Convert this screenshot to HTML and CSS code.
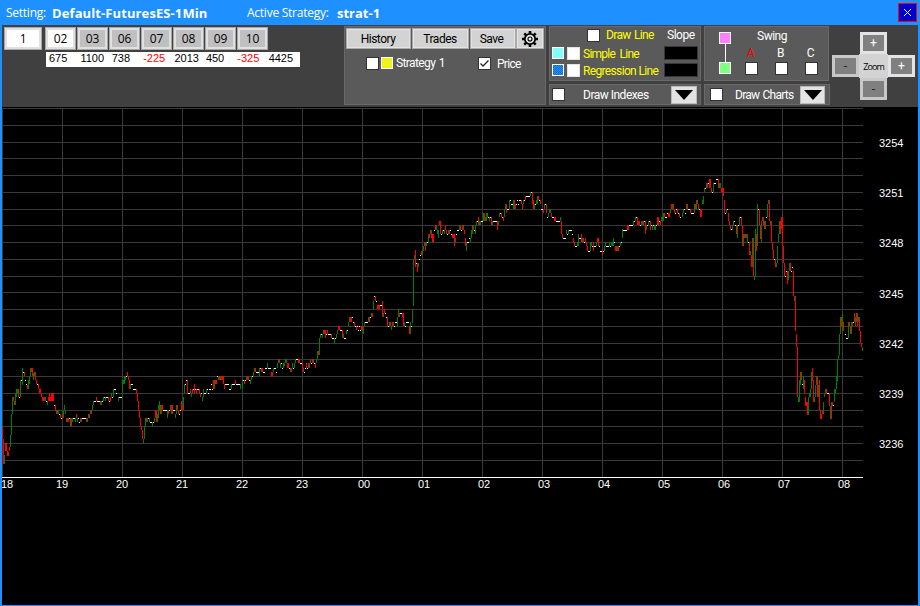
FILE: index.html
```html
<!DOCTYPE html>
<html lang="en">
<head>
<meta charset="utf-8">
<title>Default-FuturesES-1Min</title>
<link rel="stylesheet" href="styles.css">
</head>
<body>
<div class="window">
  <header class="titlebar">
    <span class="caption">Setting:</span><strong class="setting">Default-FuturesES-1Min</strong>
    <span class="caption active">Active Strategy:</span><strong class="strategy">strat-1</strong>
    <button class="close" aria-label="Close"><svg width="9" height="9" viewBox="0 0 9 9"><path d="M1 1L8 8M8 1L1 8" stroke="#fff" fill="none"/></svg></button>
  </header>
  <div class="toolbar">
    <section class="days">
      <div class="tabs"><button class="tab one">1</button><button class="tab on">02</button><button class="tab">03</button><button class="tab">06</button><button class="tab">07</button><button class="tab">08</button><button class="tab">09</button><button class="tab">10</button></div>
      <div class="totals"><span>675</span><span>1100</span><span>738</span><span class="neg">-225</span><span>2013</span><span>450</span><span class="neg">-325</span><span>4425</span></div>
    </section>
    <section class="panel main">
      <div class="actions"><button class="btn history">History</button><button class="btn trades">Trades</button><button class="btn save">Save</button><button class="btn gear" aria-label="Settings"><svg width="18" height="18" viewBox="0 0 18 18"><g stroke="#000" stroke-width="2.6"><path d="M9 1v16M1 9h16M3.3 3.3l11.4 11.4M14.7 3.3L3.3 14.7"/></g><circle cx="9" cy="9" r="5.2" fill="#e3e3e3" stroke="#000" stroke-width="1.8"/><circle cx="9" cy="9" r="2" fill="#eee" stroke="#000" stroke-width="1.1"/></svg></button></div>
      <div class="series"><i class="check"></i><i class="swatch yellow"></i><span class="name">Strategy 1</span><i class="check price"><svg width="11" height="11" viewBox="0 0 11 11"><path d="M1.5 5.5L4 8L9.5 2.5" stroke="#222" stroke-width="1.3" fill="none"/></svg></i><span>Price</span></div>
    </section>
    <div class="stack lines">
      <section class="panel tall">
        <div class="draw"><i class="check"></i><span class="hl">Draw Line</span><span class="slope">Slope</span></div>
        <div class="line"><i class="swatch cyan"></i><i class="check plain"></i><span class="hl simple">Simple&nbsp; Line</span><i class="value"></i></div>
        <div class="line"><i class="swatch blue"></i><i class="check plain"></i><span class="hl regression">Regression Line</span><i class="value"></i></div>
      </section>
      <section class="panel short"><i class="check"></i><span class="label">Draw Indexes</span><button class="drop" aria-label="Indexes"><svg width="18" height="10"><path d="M0 0H18L9 10Z"/></svg></button></section>
    </div>
    <div class="stack swings">
      <section class="panel tall swing">
        <div class="link"><i class="swatch pink"></i><i class="bar"></i><i class="swatch green"></i></div>
        <div class="options"><span class="title">Swing</span><div class="abc"><label class="red">A<i class="check"></i></label><label>B<i class="check"></i></label><label>C<i class="check"></i></label></div></div>
      </section>
      <section class="panel short"><i class="check"></i><span class="label">Draw Charts</span><button class="drop" aria-label="Charts"><svg width="18" height="10"><path d="M0 0H18L9 10Z"/></svg></button></section>
    </div>
    <section class="zoom"><button class="up">+</button><button class="left dim">-</button><span>Zoom</span><button class="right">+</button><button class="down dim">-</button></section>
  </div>
  <svg class="chart" width="916" height="498" viewBox="2 107 916 498" shape-rendering="crispEdges">
    <g id="grid" class="grid"></g>
    <path class="up-bars" transform="translate(.5 0)" d="M4 455V464M10 435V447M11 414V435M12 397V414M15 393V405M16 389V397M17 389V393M20 380V397M22 368V385M28 380V389M29 376V384M30 368V376M33 373V380M34 372V376M44 397V401M47 401V405M56 410V414M58 410V414M63 410V418M64 405V410M65 410V414M67 418V422M71 418V426M72 418V422M75 418V422M77 418V422M80 418V422M87 418V422M88 414V418M91 410V414M92 405V410M93 401V405M101 401V405M103 397V401M105 397V401M111 393V397M113 389V397M118 397V401M122 380V393M123 380V384M124 376V384M125 376V380M130 384V389M143 439V443M144 426V439M145 418V426M147 418V422M149 418V422M152 422V426M154 418V422M157 414V422M158 405V418M159 401V410M161 405V414M167 410V418M171 405V414M175 414V418M176 405V414M183 397V410M184 384V393M191 393V397M202 397V401M203 389V397M206 389V393M214 380V389M218 376V380M221 376V380M231 384V389M240 384V389M242 380V389M246 376V380M250 380V384M251 376V380M253 372V376M254 368V372M259 368V376M267 363V368M273 368V372M277 363V368M278 359V363M280 363V368M283 363V368M284 363V366M285 359V363M286 359V363M291 368V372M292 363V368M294 363V368M295 359V363M309 363V368M312 359V363M316 359V363M317 351V359M319 338V355M320 334V338M322 334V338M323 330V334M334 338V343M336 334V338M337 330V334M343 334V338M346 330V334M348 322V326M349 317V322M363 326V334M364 322V326M368 317V322M371 313V317M373 301V309M383 313V317M389 322V326M391 326V330M392 322V326M397 317V326M398 309V317M404 322V326M410 322V334M412 309V323M413 259V306M414 255V259M418 263V267M422 251V255M423 246V251M424 242V246M426 242V246M428 234V242M430 230V234M436 225V230M437 230V234M438 230V238M442 230V234M444 230V234M449 230V234M455 238V242M459 225V230M462 225V230M466 242V251M470 238V242M471 230V238M472 225V234M475 225V234M476 221V225M479 221V225M480 221V225M483 213V221M485 217V221M486 213V221M487 213V217M489 217V221M492 221V225M498 221V225M499 213V217M504 209V217M505 204V209M509 200V209M513 200V209M515 204V209M523 200V204M530 192V196M534 204V209M536 200V204M537 196V204M544 204V209M548 213V217M549 209V213M550 209V213M560 217V221M566 230V234M568 230V234M577 242V246M578 234V246M582 238V242M590 242V251M591 242V246M596 242V246M604 246V251M605 242V246M609 242V246M611 242V246M612 242V246M613 238V246M617 246V251M620 242V246M622 229V238M633 221V225M635 217V221M641 221V225M643 221V225M646 225V230M648 221V225M652 225V230M654 225V230M655 225V230M661 217V221M662 217V221M663 213V221M670 209V213M672 204V209M682 213V217M683 209V213M686 204V209M694 204V213M696 200V209M702 200V204M703 196V204M704 188V192M706 183V188M713 183V192M719 183V188M720 183V188M726 209V213M732 225V230M733 221V225M737 225V238M739 217V225M743 234V246M745 234V238M747 234V242M750 251V255M752 238V267M754 276V280M755 229V276M757 204V246M761 221V242M762 217V221M765 221V229M767 204V217M768 200V204M770 221V225M776 263V267M777 246V263M778 234V242M779 221V234M788 271V280M789 263V271M794 296V301M798 397V402M799 380V402M800 372V385M803 376V389M808 397V415M809 393V397M810 389V397M811 372V389M814 397V402M815 385V397M816 376V385M818 385V397M823 402V414M824 393V397M825 389V393M831 402V419M834 389V402M835 389V393M836 376V389M837 359V381M838 355V359M839 334V355M840 317V334M842 313V331M848 322V338M851 322V334M855 317V326M856 313V322M858 317V322M862 347V351"/>
    <path class="down-bars" transform="translate(.5 0)" d="M2 426V439M3 439V464M5 443V451M6 443V451M7 451V456M8 452V456M9 447V451M13 397V401M14 401V405M18 389V397M24 372V376M27 385V389M31 368V372M32 368V376M35 372V380M36 380V384M38 384V389M39 389V393M40 389V393M41 393V397M42 397V401M43 397V401M45 397V401M48 397V401M49 393V401M50 397V401M51 393V401M52 393V401M53 393V401M55 405V410M57 410V414M60 414V418M62 414V418M66 418V422M68 418V422M70 418V426M76 414V418M81 418V422M86 418V422M89 414V418M90 410V414M96 397V401M100 401V405M108 397V401M110 397V401M127 372V376M128 376V380M129 380V389M136 389V393M137 393V401M138 401V410M139 410V418M140 418V426M141 426V430M142 430V439M146 418V422M155 410V418M156 410V422M160 405V414M162 405V410M168 410V414M170 405V410M172 405V414M177 405V410M178 410V414M181 401V410M182 405V410M187 380V393M190 389V393M192 389V393M194 384V393M196 389V393M199 389V393M200 393V397M213 380V389M215 380V384M216 380V384M219 376V380M220 376V380M222 376V380M223 376V384M224 384V389M235 380V384M244 380V384M247 376V380M248 376V380M255 368V372M261 368V372M262 368V372M271 372V376M272 372V376M279 359V363M287 363V368M288 363V368M290 368V372M298 359V363M299 359V363M302 363V368M303 368V372M306 363V368M308 363V368M310 359V363M313 359V363M315 363V368M318 351V355M324 330V334M325 330V338M327 330V334M331 334V338M338 326V330M339 326V330M342 330V338M350 317V322M351 317V322M354 322V326M356 326V330M361 326V330M362 326V330M369 317V322M372 313V317M375 296V301M377 305V309M378 305V309M379 305V309M382 301V317M384 309V313M387 317V326M390 322V326M393 322V326M399 313V317M402 313V317M403 313V326M409 326V334M415 250V267M417 263V272M421 251V255M425 242V251M429 234V238M431 230V238M432 234V242M433 234V242M435 225V230M439 221V225M440 221V234M445 225V230M446 230V234M448 230V234M452 234V238M453 234V238M454 234V246M460 225V230M463 225V230M464 230V234M465 238V246M473 225V230M478 217V225M484 213V221M491 217V225M497 221V230M501 213V217M503 217V221M506 204V213M514 200V209M521 200V204M522 204V209M525 196V200M532 192V204M533 200V209M538 196V200M540 200V204M543 209V213M546 204V213M551 213V217M554 217V221M555 217V221M561 221V234M562 234V238M573 238V242M574 242V246M581 234V242M583 238V242M585 238V242M586 242V246M587 246V251M593 242V251M597 238V242M598 238V246M602 251V255M615 246V251M616 246V251M618 246V251M627 225V230M628 225V230M637 217V225M638 221V225M639 221V225M642 221V225M645 221V234M650 221V230M657 217V225M658 217V225M660 221V225M664 213V217M668 213V217M669 213V217M671 204V209M673 204V209M674 209V213M677 209V213M679 213V217M687 204V209M690 209V213M695 204V209M697 200V204M698 204V209M700 209V217M701 209V217M707 183V188M709 179V188M710 179V188M711 188V192M718 179V188M721 188V192M722 188V192M723 188V196M724 200V213M728 213V221M729 221V225M730 225V230M736 225V234M741 217V225M742 225V246M744 234V238M746 234V238M749 242V255M751 255V267M753 238V276M756 234V251M759 209V225M760 225V239M763 217V225M764 221V229M769 200V221M771 221V242M772 242V250M773 250V259M775 259V267M780 221V234M781 217V229M782 217V246M783 246V263M784 263V276M787 271V284M790 263V271M793 271V296M795 296V331M796 334V347M797 347V397M801 372V380M804 380V393M805 397V406M806 402V406M807 402V415M812 368V381M813 380V402M817 376V397M819 380V410M820 410V419M821 414V419M822 410V414M826 389V393M829 393V406M830 406V419M832 402V406M841 317V326M843 322V331M849 322V326M850 326V334M852 322V326M854 313V322M857 313V326M859 317V331M860 331V343M861 343V347"/>
    <path class="flat-bars" transform="translate(0 .5)" d="M19 397h1M21 380h1M23 372h1M25 380h1M26 384h1M37 384h1M46 401h1M54 405h1M59 414h1M61 418h1M69 418h1M73 418h2M78 418h1M79 422h1M82 418h4M94 401h2M97 401h3M102 401h1M104 397h1M106 397h2M109 401h1M112 397h1M114 389h2M116 393h1M119 397h3M126 376h1M131 384h2M133 389h3M148 418h1M150 422h2M153 422h1M163 410h4M169 410h1M173 410h2M179 414h1M180 410h1M185 384h1M186 380h1M188 393h2M193 389h1M195 389h1M197 389h2M201 393h1M204 393h2M207 389h1M208 393h1M209 389h2M211 384h1M212 389h1M217 376h1M225 384h4M229 389h2M232 384h3M236 384h4M243 380h1M245 380h1M249 380h1M252 376h1M256 372h3M260 368h1M263 372h2M265 368h2M268 368h3M274 368h2M276 372h1M281 363h1M282 368h1M289 368h1M293 368h1M296 359h2M300 363h2M304 372h1M305 368h1M307 368h1M311 363h1M314 363h1M321 334h1M326 334h1M328 334h3M332 338h2M335 338h1M340 330h2M344 338h2M347 330h1M352 317h1M353 322h1M355 326h1M357 326h1M358 330h1M359 326h1M360 330h1M365 322h3M370 317h1M374 296h1M376 301h1M380 305h2M385 313h1M386 317h1M388 326h1M394 326h1M395 322h2M400 313h2M405 326h1M406 322h3M411 326h1M416 263h1M419 259h1M420 255h1M427 242h1M434 230h1M441 234h1M443 230h1M447 234h1M450 230h1M451 234h1M456 234h1M457 230h2M461 230h1M467 242h2M469 238h1M474 230h1M477 221h1M481 221h2M488 217h1M490 217h1M493 221h4M500 213h1M502 217h1M507 209h2M510 200h1M511 204h2M516 204h1M517 200h1M518 204h1M519 200h2M524 200h1M526 196h4M531 192h1M535 204h1M539 200h1M541 209h2M545 204h1M547 217h1M552 217h2M556 221h4M563 238h3M567 234h1M569 230h3M572 234h1M575 246h2M579 238h2M584 242h1M588 251h2M592 246h1M594 246h2M599 246h1M600 251h2M603 251h1M606 246h3M610 246h1M614 242h1M619 246h1M621 242h1M623 230h4M629 225h4M634 221h1M636 217h1M640 225h1M644 221h1M647 225h1M649 221h1M651 225h1M653 225h1M656 225h1M659 221h1M665 217h2M667 213h1M675 213h1M676 209h1M678 213h1M680 217h1M684 209h1M685 213h1M688 209h2M691 213h3M699 209h1M705 188h1M708 183h1M712 192h1M714 183h2M716 179h2M725 213h1M727 209h1M731 229h1M734 221h1M735 225h1M738 225h1M740 217h1M748 242h1M758 209h1M766 217h1M774 259h1M785 276h1M786 271h1M791 271h1M792 267h1M802 384h1M827 393h2M833 405h1M845 334h1M846 338h2M853 322h1"/>
    <path d="M2 477.5H863" stroke="#fff"/>
    <g id="times" text-anchor="middle"></g>
    <g id="prices"></g>
  </svg>
</div>
<script src="chart.js"></script>
</body>
</html>
```
FILE: chart.js
```js
const NS = 'http://www.w3.org/2000/svg';
function add(parent, tag, attrs, text) {
  const el = document.createElementNS(NS, tag);
  for (const k in attrs) el.setAttribute(k, attrs[k]);
  if (text) el.textContent = text;
  document.getElementById(parent).appendChild(el);
}
// One hour is 60px wide, one point is 16.75px high.
for (let k = 1; k <= 22; k++) {
  add('grid', 'rect', { x: 2, y: Math.floor(477 - k * 16.75), width: 861, height: 1 });
}
['18','19','20','21','22','23','00','01','02','03','04','05','06','07','08'].forEach((h, i) => {
  const x = 2 + i * 60;
  add('grid', 'rect', { x: x, y: 108, width: 1, height: 369 });
  add('times', 'text', { x: i ? x + (i > 5 ? 2 : 0) : 7, y: 488 }, h);
});
for (let p = 3254, i = 0; p >= 3236; p -= 3, i++) {
  add('prices', 'text', { x: 879, y: Math.round(147 + i * 50.2) }, String(p));
}
```
FILE: styles.css
```css
* { box-sizing: border-box; }
body { margin: 0; background: #000; font: 12px Roboto, "Liberation Sans", sans-serif; }
button { margin: 0; padding: 0; font: inherit; letter-spacing: inherit; color: #000; border: 0; display: flex; align-items: center; justify-content: center; flex: none; }
i { display: block; flex: none; }
svg { display: block; }
.window { width: 920px; height: 606px; border: solid #1e90ff; border-width: 0 2px 1px; background: #000; overflow: hidden; }
.titlebar { height: 25px; background: #1e90ff; color: #fff; display: flex; align-items: center; padding-left: 4px; white-space: nowrap; font-family: "Open Sans", sans-serif; }
.caption { width: 46px; letter-spacing: -.25px; }
.setting { width: 195px; font-size: 13px; letter-spacing: .1px; }
.active { width: 90px; }
.strategy { font-size: 13px; }
.close { width: 19px; height: 19px; margin: -1px 1px 0 auto; background: #0000cd; border: 1px solid #f00; }
.toolbar { height: 82px; background: #404040; display: flex; letter-spacing: -.5px; color: #fff; white-space: nowrap; }
.days { width: 342px; padding: 2px 0 0 2px; }
.tabs { display: flex; gap: 1px; }
.tab { width: 31px; height: 23px; background: #c0c0c0; border: 3px solid #e0e0e0; outline: 1px solid #a8a8a8; outline-offset: -1px; font-family: "Open Sans", sans-serif; letter-spacing: -.2px; }
.tab.one { width: 38px; margin-right: 2px; background: #fff; }
.tab.on { background: #fff; }
.totals { width: 254px; height: 15px; margin: 2px 0 0 42px; padding-left: 3px; background: #fff; color: #000; display: flex; font: 11px/13px "Liberation Sans", sans-serif; letter-spacing: 0; }
.totals span { width: 32px; }
.totals .neg { color: #f00; }
.panel { background: #5a5a5a; border: 1px solid #696969; }
.main { width: 202px; height: 79px; margin-top: 1px; padding: 1px; }
.actions { display: flex; gap: 1px; }
.btn { height: 21px; background: #d3d3d3; border: 1px solid #aaa; box-shadow: inset 0 0 0 1px #e3e3e3; padding-right: 1px; }
.history { width: 65px; }
.trades { width: 57px; }
.save { width: 46px; padding-right: 3px; }
.gear { width: 28px; margin-left: -1px; padding-right: 0; }
.series { display: flex; align-items: center; height: 14px; margin-top: 7px; padding-left: 20px; }
.check { width: 13px; height: 13px; background: #fff; border: 1px solid #333; }
.plain { border-color: #e3e3e3; }
.swatch { width: 12px; height: 12px; border: 1px solid #fff; }
.yellow { background: #f2f21a; margin: 0 3px 0 2px; }
.cyan { background: #80ffff; }
.blue { background: repeating-conic-gradient(#1e90ff 0 25%, #176fc8 0 50%) 0 0 / 2px 2px; }
.pink { background: #ff80ff; }
.green { background: #80ff80; }
.name { width: 82px; letter-spacing: -.6px; word-spacing: 1px; }
.price { margin-right: 6px; }
.price + span { line-height: 16px; padding-top: 1px; letter-spacing: -.7px; }
.stack { margin-top: 1px; display: flex; flex-direction: column; gap: 3px; }
.lines { width: 152px; margin-left: 3px; }
.swings { width: 126px; margin-left: 3px; }
.tall { height: 55px; }
.short { height: 21px; display: flex; align-items: center; }
.hl { color: #ff0; }
.draw { display: flex; align-items: center; height: 16px; padding-left: 37px; }
.draw .hl { margin-left: 6px; width: 61px; letter-spacing: -.65px; word-spacing: 1px; }
.line { display: flex; align-items: center; height: 16px; margin: 2px 0 -1px; padding-left: 2px; }
.line .check { margin: 0 3px; }
.line .hl { width: 81px; padding-top: 1px; }
.simple { letter-spacing: -.75px; }
.regression { letter-spacing: -.65px; }
.value { width: 34px; height: 14px; background: #000; border: 1px solid #383838; margin-top: -1px; }
.lines .short { padding: 0 3px 0 2px; }
.lines .label { margin-left: 18px; }
.swings .short { padding: 0 4px 0 5px; }
.swings .label { margin-left: 12px; letter-spacing: -.75px; word-spacing: 1px; }
.drop { width: 26px; height: 18px; margin-left: auto; background: #e3e3e3; border: 1px solid #bbb; }
.swings .drop { width: 25px; }
.swing { width: 125px; display: flex; padding: 5px 0 0 14px; }
.link { display: flex; flex-direction: column; align-items: center; width: 12px; }
.bar { width: 1px; height: 18px; background: #fff; }
.options { margin-left: 14px; }
.title { display: block; line-height: 10px; margin: -1px 0 0 12px; }
.abc { display: flex; gap: 17px; margin-top: 5px; }
.abc label { width: 13px; text-align: center; line-height: 14px; text-indent: -2px; }
.abc .check { margin-top: 2px; }
.red { color: #f00; }
.zoom { display: grid; grid-template: 23px 23px 22px / 28px 28px 27px; margin: 7px 0 0 2px; height: 68px; letter-spacing: 0; }
.zoom button { width: 27px; height: 22px; background: #808080; border: 3px solid #e3e3e3; color: #fff; line-height: 1; }
.zoom .dim { border-color: #c8c8c8; color: #222; }
.up, .down { grid-column: 2; }
.left { grid-column: 1; grid-row: 2; }
.zoom span { grid-column: 2; grid-row: 2; width: 29px; margin-left: -1px; height: 24px; margin-top: -1px; background: #d3d3d3; color: #000; font: 9px/25px "Open Sans", sans-serif; letter-spacing: -.9px; text-align: center; }
.right { grid-column: 3; grid-row: 2; }
.chart { font: 11px "Liberation Sans", sans-serif; fill: #fff; }
.grid { fill: #3a3a3a; }
.up-bars { stroke: #008000; }
.down-bars { stroke: #f00; }
.flat-bars { stroke: #fff; }
```
